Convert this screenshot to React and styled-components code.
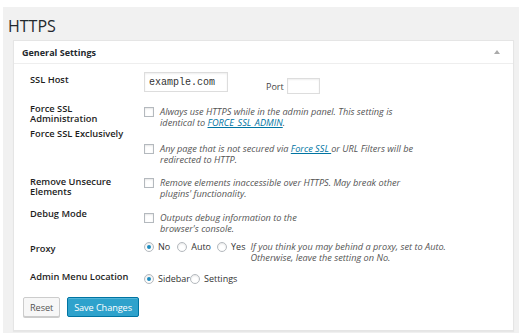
import React from 'react'
import styled, { createGlobalStyle } from 'styled-components'

const Global = createGlobalStyle`
  html, body {
    margin: 0;
    background: #fff;
  }
  body {
    font-family: 'Open Sans', 'Liberation Sans', sans-serif;
    color: #222;
  }
`

const Page = styled.div`
  margin: 7px 12px 0 3px;
  background: #f1f1f1;
  padding: 0 5px 2px 5px;
  height: 326px;
  box-sizing: border-box;
`

const Title = styled.h1`
  margin: 0;
  padding: 8px 0 0 0;
  height: 33px;
  box-sizing: border-box;
  font-size: 16px;
  font-weight: 400;
  line-height: 23px;
  color: #23282d;
`

const Panel = styled.section`
  margin-left: 5px;
  background: #fff;
  border: 1px solid #e5e5e5;
  box-shadow: 0 1px 1px rgba(0, 0, 0, 0.04);
`

const PanelHead = styled.div`
  display: flex;
  align-items: center;
  justify-content: space-between;
  height: 22px;
  padding: 0 13px 0 8px;
  border-bottom: 1px solid #eee;
  h2 {
    margin: 0;
    font-size: 9px;
    font-weight: 700;
    color: #23282d;
  }
`

const Body = styled.div`
  padding: 8px 9px 13px 9px;
`

const Table = styled.div`
  display: grid;
  grid-template-columns: 114px 1fr;
  grid-template-rows: 32px 25px 48px 32px 32px 31px 25px;
  margin-left: 7px;
`

const Label = styled.div`
  padding-top: ${p => p.$offset || 0}px;
  font-size: 9.3px;
  font-weight: 600;
  line-height: 10px;
  color: #1d1d1d;
`

const Field = styled.div`
  padding-top: ${p => p.$offset || 0}px;
  display: flex;
  align-items: flex-start;
`

const TextInput = styled.input`
  width: ${p => p.$w}px;
  height: ${p => p.$h}px;
  box-sizing: border-box;
  border: 1px solid #ddd;
  box-shadow: inset 0 1px 2px rgba(0, 0, 0, 0.07);
  padding: 0 4px;
  font-family: 'Liberation Mono', 'DejaVu Sans Mono', monospace;
  font-size: 10px;
  color: #333;
  outline: none;
`

const PortGroup = styled.label`
  display: flex;
  align-items: center;
  gap: 3px;
  margin: 6px 0 0 38px;
  font-size: 9px;
  color: #444;
`

const Check = styled.span`
  flex: none;
  width: 10px;
  height: 10px;
  margin: 1px 6px 0 0;
  box-sizing: border-box;
  border: 1px solid #b4b9be;
  background: #fff;
  box-shadow: inset 0 1px 2px rgba(0, 0, 0, 0.1);
`

const Desc = styled.p`
  margin: 0;
  font-size: 9.2px;
  font-style: italic;
  line-height: 11px;
  color: #555;
`

const Link = styled.a`
  color: #0074a2;
  text-decoration: underline;
`

const Radios = styled.div`
  display: flex;
  align-items: flex-start;
`

const Choice = styled.label`
  display: flex;
  align-items: center;
  font-size: 9px;
  line-height: 12px;
  color: #333;
  margin-right: ${p => p.$gap || 0}px;
`

const Radio = styled.span`
  flex: none;
  width: 10px;
  height: 10px;
  margin-right: 4px;
  box-sizing: border-box;
  border: 1px solid #b4b9be;
  border-radius: 50%;
  background: #fff;
  box-shadow: inset 0 1px 2px rgba(0, 0, 0, 0.1);
  display: grid;
  place-items: center;
  &::after {
    content: '';
    width: 4px;
    height: 4px;
    border-radius: 50%;
    background: ${p => (p.$on ? '#1e8cbe' : 'transparent')};
  }
`

const Actions = styled.div`
  display: flex;
  gap: 7px;
`

const Button = styled.button`
  height: 20px;
  padding: 0 ${p => (p.$primary ? 6 : 6)}px;
  border-radius: 2px;
  border: 1px solid ${p => (p.$primary ? '#0074a2' : '#ccc')};
  background: ${p => (p.$primary ? '#2ea2cc' : '#f7f7f7')};
  color: ${p => (p.$primary ? '#fff' : '#555')};
  box-shadow: ${p => (p.$primary ? 'inset 0 1px 0 rgba(120,200,230,0.5)' : '0 1px 0 #ccc')};
  font-family: 'Open Sans', 'Liberation Sans', sans-serif;
  font-size: 9.2px;
  letter-spacing: -0.1px;
  cursor: pointer;
`

const App = () => {
  return (
    <>
      <Global />
      <Page>
        <Title>HTTPS</Title>
        <Panel>
          <PanelHead>
            <h2>General Settings</h2>
            <svg width='6' height='4' viewBox='0 0 6 4'>
              <path d='M0 4 L3 0 L6 4 Z' fill='#aaa' />
            </svg>
          </PanelHead>
          <Body>
            <Table>
              <Label $offset={3}>SSL Host</Label>
              <Field>
                <TextInput $w={84} $h={20} defaultValue='example.com' />
                <PortGroup>
                  Port
                  <TextInput $w={33} $h={16} />
                </PortGroup>
              </Field>

              <Label>Force SSL<br />Administration</Label>
              <Field $offset={2}>
                <Check />
                <Desc>
                  Always use HTTPS while in the admin panel. This setting is<br />
                  identical to <Link href='#'>FORCE_SSL_ADMIN</Link>.
                </Desc>
              </Field>

              <Label>Force SSL Exclusively</Label>
              <Field $offset={14}>
                <Check />
                <Desc>
                  Any page that is not secured via <Link href='#'>Force SSL </Link>or URL Filters will be<br />
                  redirected to HTTP.
                </Desc>
              </Field>

              <Label>Remove Unsecure<br />Elements</Label>
              <Field>
                <Check />
                <Desc>
                  Remove elements inaccessible over HTTPS. May break other<br />
                  plugins' functionality.
                </Desc>
              </Field>

              <Label>Debug Mode</Label>
              <Field $offset={3}>
                <Check />
                <Desc>
                  Outputs debug information to the<br />
                  browser's console.
                </Desc>
              </Field>

              <Label $offset={3}>Proxy</Label>
              <Field>
                <Radios>
                  <Choice $gap={7}><Radio $on />No</Choice>
                  <Choice $gap={6}><Radio />Auto</Choice>
                  <Choice $gap={5}><Radio />Yes</Choice>
                  <Desc>
                    If you think you may behind a proxy, set to Auto.<br />
                    Otherwise, leave the setting on No.
                  </Desc>
                </Radios>
              </Field>

              <Label>Admin Menu Location</Label>
              <Field $offset={1}>
                <Radios>
                  <Choice><Radio $on />Sidebar</Choice>
                  <Choice><Radio />Settings</Choice>
                </Radios>
              </Field>
            </Table>
            <Actions>
              <Button>Reset</Button>
              <Button $primary>Save Changes</Button>
            </Actions>
          </Body>
        </Panel>
      </Page>
    </>
  )
}

export default App
